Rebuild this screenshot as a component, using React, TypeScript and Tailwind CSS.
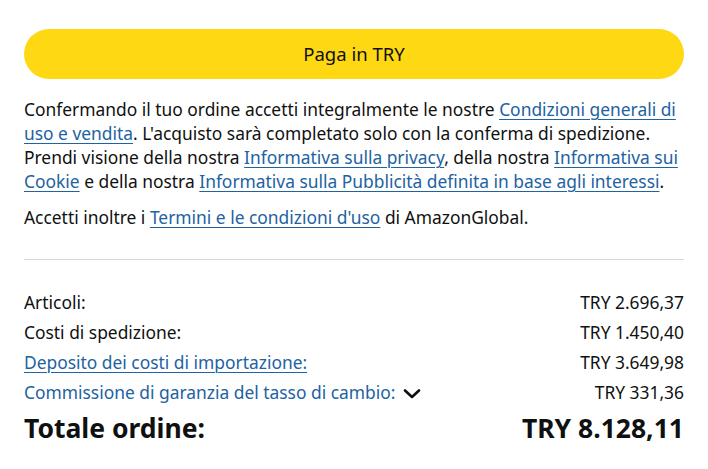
import React from "react";

const Link = ({ children }: { children: React.ReactNode }) => (
  <a className="text-[#2162a1] underline underline-offset-[3px] decoration-1" href="#">
    {children}
  </a>
);

export default function App() {
  return (
    <div
      className="w-[708px] h-[469px] bg-white px-6 pt-[29px] text-[#0f1111] overflow-hidden"
      style={{ fontFamily: '"Noto Sans", "Open Sans", sans-serif' }}
    >
      <button className="w-full h-[50px] rounded-full bg-[#ffd814] text-[18.5px] text-[#0f1111] flex items-center justify-center">
        Paga in TRY
      </button>
      <p className="mt-[18px] text-[17.4px] leading-[24px]">
        Confermando il tuo ordine accetti integralmente le nostre <Link>Condizioni generali di uso e vendita</Link>. L'acquisto sarà completato solo con la conferma di spedizione. Prendi visione della nostra <Link>Informativa sulla privacy</Link>, della nostra <Link>Informativa sui Cookie</Link> e della nostra <Link>Informativa sulla Pubblicità definita in base agli interessi</Link>.
      </p>
      <p className="mt-[12px] text-[17.4px] leading-[24px]">
        Accetti inoltre i <Link>Termini e le condizioni d'uso</Link> di AmazonGlobal.
      </p>
      <div className="mt-[30px] h-px bg-[#d5d9d9]" />
      <div className="mt-[27px] text-[17.4px]">
        <div className="h-[30px] flex items-center justify-between">
          <span>Articoli:</span>
          <span>TRY 2.696,37</span>
        </div>
        <div className="h-[30px] flex items-center justify-between">
          <span>Costi di spedizione:</span>
          <span>TRY 1.450,40</span>
        </div>
        <div className="h-[30px] flex items-center justify-between">
          <Link>Deposito dei costi di importazione:</Link>
          <span>TRY 3.649,98</span>
        </div>
        <div className="h-[30px] flex items-center justify-between">
          <span className="flex items-center text-[#2162a1]">
            Commissione di garanzia del tasso di cambio:
            <svg className="ml-[8px] mt-[4px]" width="18" height="12" viewBox="0 0 18 12" fill="none">
              <path d="M2 2.5 L9 9 L16 2.5" stroke="#0f1111" strokeWidth="2.6" strokeLinecap="round" strokeLinejoin="round" />
            </svg>
          </span>
          <span>TRY 331,36</span>
        </div>
        <div className="h-[44px] flex items-center justify-between font-bold text-[26.5px]">
          <span>Totale ordine:</span>
          <span>TRY 8.128,11</span>
        </div>
      </div>
    </div>
  );
}
